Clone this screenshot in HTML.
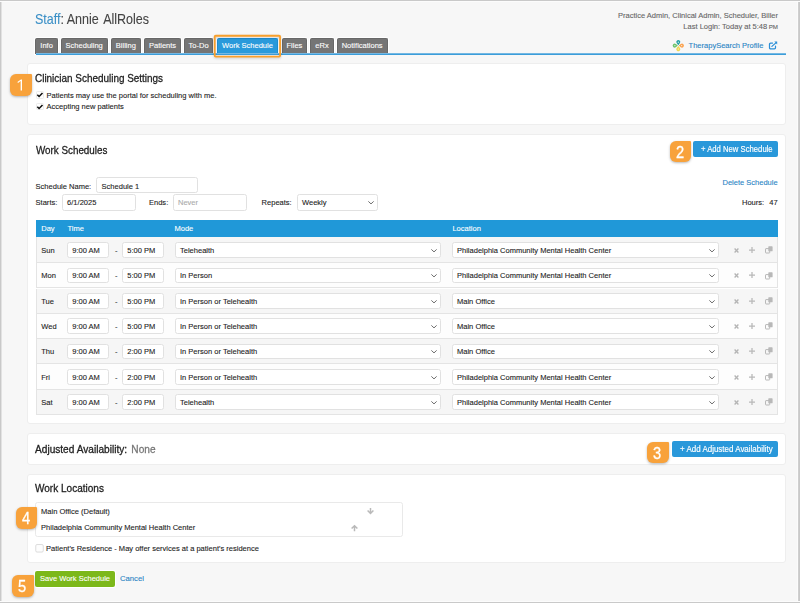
<!DOCTYPE html>
<html><head><meta charset="utf-8"><title>Work Schedule</title>
<style>
html,body{margin:0;padding:0;}
body{width:800px;height:603px;overflow:hidden;background:#f7f7f7;font-family:"Liberation Sans",sans-serif;position:relative;}
.t{position:absolute;white-space:nowrap;line-height:12px;font-family:"Liberation Sans",sans-serif;-webkit-text-stroke-width:0.1px;}
.b{position:absolute;box-sizing:border-box;}
.panel{background:#fff;border:1px solid #eeeeee;border-radius:3px;}
.inp{background:#fff;border:1px solid #e1e1e1;border-radius:2.5px;}
.tab{background:#757575;border:1px solid #686868;border-bottom:none;border-radius:2px 2px 0 0;box-shadow:0 0 0 1px #fff;}
.badge{background:#f8a23b;border-radius:6px 1px 6px 6px;box-shadow:0 1px 2.5px rgba(0,0,0,.28);}
.btn{background:#2998da;border-radius:2px;}
svg{position:absolute;overflow:visible;}
</style></head><body>
<div class="t " style="left:34.60px;top:12.58px;font-size:13.9px;color:#444;transform:scaleX(0.9005);transform-origin:0 50%;"><span style="color:#3a8fc6">Staff</span>: Annie<span style="margin-left:1.8px"> </span>AllRoles</div>
<div class="t " style="right:22.00px;top:10.34px;font-size:7.52px;color:#666;">Practice Admin, Clinical Admin, Scheduler, Biller</div>
<div class="t " style="right:22.00px;top:21.34px;font-size:7.52px;color:#666;">Last Login: Today at 5:48<span style="font-size:6.2px;margin-left:1.5px">PM</span></div>
<div class="t " style="left:688.60px;top:40.09px;font-size:7.52px;color:#2883c4;">TherapySearch Profile</div>
<div class="b tab" style="left:35.30px;top:37.50px;width:22.60px;height:16.10px;text-align:center;"></div>
<div class="t" style="left:35.30px;width:22.60px;text-align:center;top:39.50px;font-size:7.52px;color:#fff;">Info</div>
<div class="b tab" style="left:60.50px;top:37.50px;width:47.40px;height:16.10px;text-align:center;"></div>
<div class="t" style="left:60.50px;width:47.40px;text-align:center;top:39.50px;font-size:7.52px;color:#fff;">Scheduling</div>
<div class="b tab" style="left:110.70px;top:37.50px;width:30.35px;height:16.10px;text-align:center;"></div>
<div class="t" style="left:110.70px;width:30.35px;text-align:center;top:39.50px;font-size:7.52px;color:#fff;">Billing</div>
<div class="b tab" style="left:143.90px;top:37.50px;width:37.30px;height:16.10px;text-align:center;"></div>
<div class="t" style="left:143.90px;width:37.30px;text-align:center;top:39.50px;font-size:7.52px;color:#fff;">Patients</div>
<div class="b tab" style="left:183.80px;top:37.50px;width:29.70px;height:16.10px;text-align:center;"></div>
<div class="t" style="left:183.80px;width:29.70px;text-align:center;top:39.50px;font-size:7.52px;color:#fff;">To-Do</div>
<div class="b tab" style="left:216.60px;top:37.50px;width:61.80px;height:16.10px;background:#2a9adb;border-color:#1f8ed0;text-align:center;"></div>
<div class="t" style="left:216.60px;width:61.80px;text-align:center;top:39.50px;font-size:7.52px;color:#fff;">Work Schedule</div>
<div class="b tab" style="left:281.50px;top:37.50px;width:25.80px;height:16.10px;text-align:center;"></div>
<div class="t" style="left:281.50px;width:25.80px;text-align:center;top:39.50px;font-size:7.52px;color:#fff;">Files</div>
<div class="b tab" style="left:310.35px;top:37.50px;width:23.40px;height:16.10px;text-align:center;"></div>
<div class="t" style="left:310.35px;width:23.40px;text-align:center;top:39.50px;font-size:7.52px;color:#fff;">eRx</div>
<div class="b tab" style="left:336.60px;top:37.50px;width:51.10px;height:16.10px;text-align:center;"></div>
<div class="t" style="left:336.60px;width:51.10px;text-align:center;top:39.50px;font-size:7.52px;color:#fff;">Notifications</div>
<div class="b" style="left:36.00px;top:53.00px;width:750.00px;height:2.00px;background:linear-gradient(180deg,#74b8e3 0 1px,#3c9dd9 1px 2px);"></div>
<svg style="left:0;top:0" width="800" height="70" viewBox="0 0 800 70"><rect x="214.7" y="35.75" width="65.4" height="20.8" rx="1.1" fill="none" stroke="#f9a02c" stroke-width="1.85" style="filter:drop-shadow(0 1px 1px rgba(0,0,0,.18))"/></svg>
<div class="b panel" style="left:27.20px;top:63.00px;width:759.20px;height:62.40px;"></div>
<div class="b panel" style="left:27.20px;top:133.80px;width:759.20px;height:290.20px;"></div>
<div class="b panel" style="left:27.20px;top:432.50px;width:759.20px;height:32.90px;"></div>
<div class="b panel" style="left:27.20px;top:474.00px;width:759.20px;height:88.50px;"></div>
<div class="t " style="left:35.30px;top:72.42px;font-size:11.2px;color:#222;transform:scaleX(0.8876);transform-origin:0 50%;-webkit-text-stroke-width:0.3px;">Clinician Scheduling Settings</div>
<div class="t " style="left:46.50px;top:89.69px;font-size:7.52px;color:#222;">Patients may use the portal for scheduling with me.</div>
<div class="t " style="left:46.50px;top:101.09px;font-size:7.52px;color:#222;">Accepting new patients</div>
<div class="b" style="left:35.60px;top:91.00px;width:8.00px;height:7.60px;background:#fff;border:1px solid #ebebeb;border-radius:1.5px;"></div>
<svg style="left:35.6px;top:91.0px" width="8" height="7.6" viewBox="0 0 8 7.6"><path d="M1.3 3.7 L3.1 5.5 L6.5 2.0" fill="none" stroke="#111" stroke-width="1.55"/></svg>
<div class="b" style="left:35.60px;top:102.50px;width:8.00px;height:7.60px;background:#fff;border:1px solid #ebebeb;border-radius:1.5px;"></div>
<svg style="left:35.6px;top:102.5px" width="8" height="7.6" viewBox="0 0 8 7.6"><path d="M1.3 3.7 L3.1 5.5 L6.5 2.0" fill="none" stroke="#111" stroke-width="1.55"/></svg>
<div class="t " style="left:35.50px;top:144.02px;font-size:11.2px;color:#222;transform:scaleX(0.8777);transform-origin:0 50%;-webkit-text-stroke-width:0.3px;">Work Schedules</div>
<div class="b btn" style="left:693.40px;top:141.00px;width:84.60px;height:15.60px;"></div>
<div class="t " style="left:701.30px;top:143.42px;font-size:8.6px;color:#fff;transform:scaleX(0.8953);transform-origin:0 50%;-webkit-text-stroke-width:0.15px;">+ Add New Schedule</div>
<div class="t " style="right:22.40px;top:176.69px;font-size:7.52px;color:#2883c4;">Delete Schedule</div>
<div class="t " style="left:742.00px;top:197.09px;font-size:7.52px;color:#222;">Hours:</div>
<div class="t " style="right:22.40px;top:197.09px;font-size:7.52px;color:#222;">47</div>
<div class="t " style="left:35.60px;top:180.69px;font-size:7.52px;color:#222;">Schedule Name:</div>
<div class="b inp" style="left:96.30px;top:177.30px;width:101.30px;height:16.10px;"></div>
<div class="t " style="left:101.60px;top:180.69px;font-size:7.52px;color:#222;">Schedule 1</div>
<div class="t " style="left:35.60px;top:197.49px;font-size:7.52px;color:#222;">Starts:</div>
<div class="b inp" style="left:62.00px;top:194.40px;width:74.40px;height:16.20px;"></div>
<div class="t " style="left:67.10px;top:197.49px;font-size:7.52px;color:#222;">6/1/2025</div>
<div class="t " style="left:149.00px;top:197.49px;font-size:7.52px;color:#222;">Ends:</div>
<div class="b inp" style="left:173.00px;top:194.40px;width:74.00px;height:16.20px;"></div>
<div class="t " style="left:178.00px;top:197.49px;font-size:7.52px;color:#aaa;">Never</div>
<div class="t " style="left:261.60px;top:196.69px;font-size:7.52px;color:#222;">Repeats:</div>
<div class="b inp" style="left:297.00px;top:194.40px;width:81.00px;height:16.80px;"></div>
<div class="t " style="left:302.00px;top:197.49px;font-size:7.52px;color:#222;">Weekly</div>
<svg style="left:368.20px;top:201.30px" width="6" height="3.4" viewBox="0 0 6 3.4"><path d="M0.35 0.4 L3 2.9 L5.65 0.4" fill="none" stroke="#666" stroke-width="0.95"/></svg>
<div class="b" style="left:35.60px;top:220.00px;width:742.00px;height:17.40px;background:#2098d8;"></div>
<div class="t " style="left:41.25px;top:223.29px;font-size:7.52px;color:#fff;">Day</div>
<div class="t " style="left:67.50px;top:223.29px;font-size:7.52px;color:#fff;">Time</div>
<div class="t " style="left:174.50px;top:223.29px;font-size:7.52px;color:#fff;">Mode</div>
<div class="t " style="left:452.40px;top:223.29px;font-size:7.52px;color:#fff;">Location</div>
<div class="b" style="left:35.60px;top:237.40px;width:742.00px;height:25.80px;background:#f6f6f6;border:1px solid #e4e4e4;border-top:none;"></div>
<div class="t " style="left:41.25px;top:245.09px;font-size:7.52px;color:#222;">Sun</div>
<div class="b inp" style="left:67.30px;top:242.40px;width:42.10px;height:15.80px;"></div>
<div class="t " style="left:72.30px;top:245.09px;font-size:7.52px;color:#222;">9:00 AM</div>
<div class="t " style="left:115.00px;top:245.09px;font-size:7.52px;color:#222;">-</div>
<div class="b inp" style="left:122.00px;top:242.40px;width:42.30px;height:15.80px;"></div>
<div class="t " style="left:127.30px;top:245.09px;font-size:7.52px;color:#222;">5:00 PM</div>
<div class="b inp" style="left:175.00px;top:242.40px;width:266.40px;height:15.80px;"></div>
<div class="t " style="left:180.00px;top:245.09px;font-size:7.52px;color:#222;">Telehealth</div>
<svg style="left:431.20px;top:249.10px" width="6" height="3.4" viewBox="0 0 6 3.4"><path d="M0.35 0.4 L3 2.9 L5.65 0.4" fill="none" stroke="#666" stroke-width="0.95"/></svg>
<div class="b inp" style="left:452.00px;top:242.40px;width:267.00px;height:15.80px;"></div>
<div class="t " style="left:457.00px;top:245.09px;font-size:7.52px;color:#222;">Philadelphia Community Mental Health Center</div>
<svg style="left:708.80px;top:249.10px" width="6" height="3.4" viewBox="0 0 6 3.4"><path d="M0.35 0.4 L3 2.9 L5.65 0.4" fill="none" stroke="#666" stroke-width="0.95"/></svg>
<svg style="left:734.4px;top:248.00px" width="5" height="5" viewBox="0 0 5 5"><path d="M0.6 0.6 L4.4 4.4 M4.4 0.6 L0.6 4.4" fill="none" stroke="#b4b4b4" stroke-width="1.35"/></svg>
<svg style="left:749.4px;top:247.00px" width="6" height="6" viewBox="0 0 6 6"><path d="M3 0 L3 6 M0 3 L6 3" fill="none" stroke="#b8b8b8" stroke-width="1.25"/></svg>
<svg style="left:765.2px;top:246.20px" width="7.8" height="7.6" viewBox="0 0 7.8 7.6"><rect x="0.5" y="2.6" width="4.2" height="4.4" rx="0.5" fill="none" stroke="#b8b8b8" stroke-width="1"/><rect x="3.3" y="0.3" width="4.3" height="5" rx="0.6" fill="#b8b8b8"/></svg>
<div class="b" style="left:35.60px;top:263.20px;width:742.00px;height:25.30px;background:#fdfdfd;border:1px solid #e4e4e4;border-top:none;"></div>
<div class="t " style="left:41.25px;top:270.39px;font-size:7.52px;color:#222;">Mon</div>
<div class="b inp" style="left:67.30px;top:267.70px;width:42.10px;height:15.80px;"></div>
<div class="t " style="left:72.30px;top:270.39px;font-size:7.52px;color:#222;">9:00 AM</div>
<div class="t " style="left:115.00px;top:270.39px;font-size:7.52px;color:#222;">-</div>
<div class="b inp" style="left:122.00px;top:267.70px;width:42.30px;height:15.80px;"></div>
<div class="t " style="left:127.30px;top:270.39px;font-size:7.52px;color:#222;">5:00 PM</div>
<div class="b inp" style="left:175.00px;top:267.70px;width:266.40px;height:15.80px;"></div>
<div class="t " style="left:180.00px;top:270.39px;font-size:7.52px;color:#222;">In Person</div>
<svg style="left:431.20px;top:274.40px" width="6" height="3.4" viewBox="0 0 6 3.4"><path d="M0.35 0.4 L3 2.9 L5.65 0.4" fill="none" stroke="#666" stroke-width="0.95"/></svg>
<div class="b inp" style="left:452.00px;top:267.70px;width:267.00px;height:15.80px;"></div>
<div class="t " style="left:457.00px;top:270.39px;font-size:7.52px;color:#222;">Philadelphia Community Mental Health Center</div>
<svg style="left:708.80px;top:274.40px" width="6" height="3.4" viewBox="0 0 6 3.4"><path d="M0.35 0.4 L3 2.9 L5.65 0.4" fill="none" stroke="#666" stroke-width="0.95"/></svg>
<svg style="left:734.4px;top:273.30px" width="5" height="5" viewBox="0 0 5 5"><path d="M0.6 0.6 L4.4 4.4 M4.4 0.6 L0.6 4.4" fill="none" stroke="#b4b4b4" stroke-width="1.35"/></svg>
<svg style="left:749.4px;top:272.30px" width="6" height="6" viewBox="0 0 6 6"><path d="M3 0 L3 6 M0 3 L6 3" fill="none" stroke="#b8b8b8" stroke-width="1.25"/></svg>
<svg style="left:765.2px;top:271.50px" width="7.8" height="7.6" viewBox="0 0 7.8 7.6"><rect x="0.5" y="2.6" width="4.2" height="4.4" rx="0.5" fill="none" stroke="#b8b8b8" stroke-width="1"/><rect x="3.3" y="0.3" width="4.3" height="5" rx="0.6" fill="#b8b8b8"/></svg>
<div class="b" style="left:35.60px;top:288.50px;width:742.00px;height:25.30px;background:#f6f6f6;border:1px solid #e4e4e4;border-top:none;"></div>
<div class="t " style="left:41.25px;top:295.69px;font-size:7.52px;color:#222;">Tue</div>
<div class="b inp" style="left:67.30px;top:293.00px;width:42.10px;height:15.80px;"></div>
<div class="t " style="left:72.30px;top:295.69px;font-size:7.52px;color:#222;">9:00 AM</div>
<div class="t " style="left:115.00px;top:295.69px;font-size:7.52px;color:#222;">-</div>
<div class="b inp" style="left:122.00px;top:293.00px;width:42.30px;height:15.80px;"></div>
<div class="t " style="left:127.30px;top:295.69px;font-size:7.52px;color:#222;">5:00 PM</div>
<div class="b inp" style="left:175.00px;top:293.00px;width:266.40px;height:15.80px;"></div>
<div class="t " style="left:180.00px;top:295.69px;font-size:7.52px;color:#222;">In Person or Telehealth</div>
<svg style="left:431.20px;top:299.70px" width="6" height="3.4" viewBox="0 0 6 3.4"><path d="M0.35 0.4 L3 2.9 L5.65 0.4" fill="none" stroke="#666" stroke-width="0.95"/></svg>
<div class="b inp" style="left:452.00px;top:293.00px;width:267.00px;height:15.80px;"></div>
<div class="t " style="left:457.00px;top:295.69px;font-size:7.52px;color:#222;">Main Office</div>
<svg style="left:708.80px;top:299.70px" width="6" height="3.4" viewBox="0 0 6 3.4"><path d="M0.35 0.4 L3 2.9 L5.65 0.4" fill="none" stroke="#666" stroke-width="0.95"/></svg>
<svg style="left:734.4px;top:298.60px" width="5" height="5" viewBox="0 0 5 5"><path d="M0.6 0.6 L4.4 4.4 M4.4 0.6 L0.6 4.4" fill="none" stroke="#b4b4b4" stroke-width="1.35"/></svg>
<svg style="left:749.4px;top:297.60px" width="6" height="6" viewBox="0 0 6 6"><path d="M3 0 L3 6 M0 3 L6 3" fill="none" stroke="#b8b8b8" stroke-width="1.25"/></svg>
<svg style="left:765.2px;top:296.80px" width="7.8" height="7.6" viewBox="0 0 7.8 7.6"><rect x="0.5" y="2.6" width="4.2" height="4.4" rx="0.5" fill="none" stroke="#b8b8b8" stroke-width="1"/><rect x="3.3" y="0.3" width="4.3" height="5" rx="0.6" fill="#b8b8b8"/></svg>
<div class="b" style="left:35.60px;top:313.80px;width:742.00px;height:25.30px;background:#fdfdfd;border:1px solid #e4e4e4;border-top:none;"></div>
<div class="t " style="left:41.25px;top:320.99px;font-size:7.52px;color:#222;">Wed</div>
<div class="b inp" style="left:67.30px;top:318.30px;width:42.10px;height:15.80px;"></div>
<div class="t " style="left:72.30px;top:320.99px;font-size:7.52px;color:#222;">9:00 AM</div>
<div class="t " style="left:115.00px;top:320.99px;font-size:7.52px;color:#222;">-</div>
<div class="b inp" style="left:122.00px;top:318.30px;width:42.30px;height:15.80px;"></div>
<div class="t " style="left:127.30px;top:320.99px;font-size:7.52px;color:#222;">5:00 PM</div>
<div class="b inp" style="left:175.00px;top:318.30px;width:266.40px;height:15.80px;"></div>
<div class="t " style="left:180.00px;top:320.99px;font-size:7.52px;color:#222;">In Person or Telehealth</div>
<svg style="left:431.20px;top:325.00px" width="6" height="3.4" viewBox="0 0 6 3.4"><path d="M0.35 0.4 L3 2.9 L5.65 0.4" fill="none" stroke="#666" stroke-width="0.95"/></svg>
<div class="b inp" style="left:452.00px;top:318.30px;width:267.00px;height:15.80px;"></div>
<div class="t " style="left:457.00px;top:320.99px;font-size:7.52px;color:#222;">Main Office</div>
<svg style="left:708.80px;top:325.00px" width="6" height="3.4" viewBox="0 0 6 3.4"><path d="M0.35 0.4 L3 2.9 L5.65 0.4" fill="none" stroke="#666" stroke-width="0.95"/></svg>
<svg style="left:734.4px;top:323.90px" width="5" height="5" viewBox="0 0 5 5"><path d="M0.6 0.6 L4.4 4.4 M4.4 0.6 L0.6 4.4" fill="none" stroke="#b4b4b4" stroke-width="1.35"/></svg>
<svg style="left:749.4px;top:322.90px" width="6" height="6" viewBox="0 0 6 6"><path d="M3 0 L3 6 M0 3 L6 3" fill="none" stroke="#b8b8b8" stroke-width="1.25"/></svg>
<svg style="left:765.2px;top:322.10px" width="7.8" height="7.6" viewBox="0 0 7.8 7.6"><rect x="0.5" y="2.6" width="4.2" height="4.4" rx="0.5" fill="none" stroke="#b8b8b8" stroke-width="1"/><rect x="3.3" y="0.3" width="4.3" height="5" rx="0.6" fill="#b8b8b8"/></svg>
<div class="b" style="left:35.60px;top:339.10px;width:742.00px;height:25.30px;background:#f6f6f6;border:1px solid #e4e4e4;border-top:none;"></div>
<div class="t " style="left:41.25px;top:346.29px;font-size:7.52px;color:#222;">Thu</div>
<div class="b inp" style="left:67.30px;top:343.60px;width:42.10px;height:15.80px;"></div>
<div class="t " style="left:72.30px;top:346.29px;font-size:7.52px;color:#222;">9:00 AM</div>
<div class="t " style="left:115.00px;top:346.29px;font-size:7.52px;color:#222;">-</div>
<div class="b inp" style="left:122.00px;top:343.60px;width:42.30px;height:15.80px;"></div>
<div class="t " style="left:127.30px;top:346.29px;font-size:7.52px;color:#222;">2:00 PM</div>
<div class="b inp" style="left:175.00px;top:343.60px;width:266.40px;height:15.80px;"></div>
<div class="t " style="left:180.00px;top:346.29px;font-size:7.52px;color:#222;">In Person or Telehealth</div>
<svg style="left:431.20px;top:350.30px" width="6" height="3.4" viewBox="0 0 6 3.4"><path d="M0.35 0.4 L3 2.9 L5.65 0.4" fill="none" stroke="#666" stroke-width="0.95"/></svg>
<div class="b inp" style="left:452.00px;top:343.60px;width:267.00px;height:15.80px;"></div>
<div class="t " style="left:457.00px;top:346.29px;font-size:7.52px;color:#222;">Main Office</div>
<svg style="left:708.80px;top:350.30px" width="6" height="3.4" viewBox="0 0 6 3.4"><path d="M0.35 0.4 L3 2.9 L5.65 0.4" fill="none" stroke="#666" stroke-width="0.95"/></svg>
<svg style="left:734.4px;top:349.20px" width="5" height="5" viewBox="0 0 5 5"><path d="M0.6 0.6 L4.4 4.4 M4.4 0.6 L0.6 4.4" fill="none" stroke="#b4b4b4" stroke-width="1.35"/></svg>
<svg style="left:749.4px;top:348.20px" width="6" height="6" viewBox="0 0 6 6"><path d="M3 0 L3 6 M0 3 L6 3" fill="none" stroke="#b8b8b8" stroke-width="1.25"/></svg>
<svg style="left:765.2px;top:347.40px" width="7.8" height="7.6" viewBox="0 0 7.8 7.6"><rect x="0.5" y="2.6" width="4.2" height="4.4" rx="0.5" fill="none" stroke="#b8b8b8" stroke-width="1"/><rect x="3.3" y="0.3" width="4.3" height="5" rx="0.6" fill="#b8b8b8"/></svg>
<div class="b" style="left:35.60px;top:364.40px;width:742.00px;height:25.30px;background:#fdfdfd;border:1px solid #e4e4e4;border-top:none;"></div>
<div class="t " style="left:41.25px;top:371.59px;font-size:7.52px;color:#222;">Fri</div>
<div class="b inp" style="left:67.30px;top:368.90px;width:42.10px;height:15.80px;"></div>
<div class="t " style="left:72.30px;top:371.59px;font-size:7.52px;color:#222;">9:00 AM</div>
<div class="t " style="left:115.00px;top:371.59px;font-size:7.52px;color:#222;">-</div>
<div class="b inp" style="left:122.00px;top:368.90px;width:42.30px;height:15.80px;"></div>
<div class="t " style="left:127.30px;top:371.59px;font-size:7.52px;color:#222;">2:00 PM</div>
<div class="b inp" style="left:175.00px;top:368.90px;width:266.40px;height:15.80px;"></div>
<div class="t " style="left:180.00px;top:371.59px;font-size:7.52px;color:#222;">In Person or Telehealth</div>
<svg style="left:431.20px;top:375.60px" width="6" height="3.4" viewBox="0 0 6 3.4"><path d="M0.35 0.4 L3 2.9 L5.65 0.4" fill="none" stroke="#666" stroke-width="0.95"/></svg>
<div class="b inp" style="left:452.00px;top:368.90px;width:267.00px;height:15.80px;"></div>
<div class="t " style="left:457.00px;top:371.59px;font-size:7.52px;color:#222;">Philadelphia Community Mental Health Center</div>
<svg style="left:708.80px;top:375.60px" width="6" height="3.4" viewBox="0 0 6 3.4"><path d="M0.35 0.4 L3 2.9 L5.65 0.4" fill="none" stroke="#666" stroke-width="0.95"/></svg>
<svg style="left:734.4px;top:374.50px" width="5" height="5" viewBox="0 0 5 5"><path d="M0.6 0.6 L4.4 4.4 M4.4 0.6 L0.6 4.4" fill="none" stroke="#b4b4b4" stroke-width="1.35"/></svg>
<svg style="left:749.4px;top:373.50px" width="6" height="6" viewBox="0 0 6 6"><path d="M3 0 L3 6 M0 3 L6 3" fill="none" stroke="#b8b8b8" stroke-width="1.25"/></svg>
<svg style="left:765.2px;top:372.70px" width="7.8" height="7.6" viewBox="0 0 7.8 7.6"><rect x="0.5" y="2.6" width="4.2" height="4.4" rx="0.5" fill="none" stroke="#b8b8b8" stroke-width="1"/><rect x="3.3" y="0.3" width="4.3" height="5" rx="0.6" fill="#b8b8b8"/></svg>
<div class="b" style="left:35.60px;top:389.70px;width:742.00px;height:25.30px;background:#f6f6f6;border:1px solid #e4e4e4;border-top:none;"></div>
<div class="t " style="left:41.25px;top:396.89px;font-size:7.52px;color:#222;">Sat</div>
<div class="b inp" style="left:67.30px;top:394.20px;width:42.10px;height:15.80px;"></div>
<div class="t " style="left:72.30px;top:396.89px;font-size:7.52px;color:#222;">9:00 AM</div>
<div class="t " style="left:115.00px;top:396.89px;font-size:7.52px;color:#222;">-</div>
<div class="b inp" style="left:122.00px;top:394.20px;width:42.30px;height:15.80px;"></div>
<div class="t " style="left:127.30px;top:396.89px;font-size:7.52px;color:#222;">2:00 PM</div>
<div class="b inp" style="left:175.00px;top:394.20px;width:266.40px;height:15.80px;"></div>
<div class="t " style="left:180.00px;top:396.89px;font-size:7.52px;color:#222;">Telehealth</div>
<svg style="left:431.20px;top:400.90px" width="6" height="3.4" viewBox="0 0 6 3.4"><path d="M0.35 0.4 L3 2.9 L5.65 0.4" fill="none" stroke="#666" stroke-width="0.95"/></svg>
<div class="b inp" style="left:452.00px;top:394.20px;width:267.00px;height:15.80px;"></div>
<div class="t " style="left:457.00px;top:396.89px;font-size:7.52px;color:#222;">Philadelphia Community Mental Health Center</div>
<svg style="left:708.80px;top:400.90px" width="6" height="3.4" viewBox="0 0 6 3.4"><path d="M0.35 0.4 L3 2.9 L5.65 0.4" fill="none" stroke="#666" stroke-width="0.95"/></svg>
<svg style="left:734.4px;top:399.80px" width="5" height="5" viewBox="0 0 5 5"><path d="M0.6 0.6 L4.4 4.4 M4.4 0.6 L0.6 4.4" fill="none" stroke="#b4b4b4" stroke-width="1.35"/></svg>
<svg style="left:749.4px;top:398.80px" width="6" height="6" viewBox="0 0 6 6"><path d="M3 0 L3 6 M0 3 L6 3" fill="none" stroke="#b8b8b8" stroke-width="1.25"/></svg>
<svg style="left:765.2px;top:398.00px" width="7.8" height="7.6" viewBox="0 0 7.8 7.6"><rect x="0.5" y="2.6" width="4.2" height="4.4" rx="0.5" fill="none" stroke="#b8b8b8" stroke-width="1"/><rect x="3.3" y="0.3" width="4.3" height="5" rx="0.6" fill="#b8b8b8"/></svg>
<div class="t " style="left:35.00px;top:443.02px;font-size:11.2px;color:#222;transform:scaleX(0.9045);transform-origin:0 50%;-webkit-text-stroke-width:0.3px;">Adjusted Availability: <span style="color:#777;margin-left:1.6px">None</span></div>
<div class="b btn" style="left:672.40px;top:441.30px;width:105.60px;height:15.40px;"></div>
<div class="t " style="left:680.20px;top:443.42px;font-size:8.6px;color:#fff;transform:scaleX(0.9279);transform-origin:0 50%;-webkit-text-stroke-width:0.15px;">+ Add Adjusted Availability</div>
<div class="t " style="left:35.30px;top:482.12px;font-size:11.2px;color:#222;transform:scaleX(0.8962);transform-origin:0 50%;-webkit-text-stroke-width:0.3px;">Work Locations</div>
<div class="b" style="left:35.10px;top:502.40px;width:367.50px;height:34.20px;background:#fff;border:1px solid #e9e9e9;border-radius:2.5px;"></div>
<div class="t " style="left:41.10px;top:506.09px;font-size:7.52px;color:#222;">Main Office (Default)</div>
<div class="t " style="left:41.10px;top:522.49px;font-size:7.52px;color:#222;">Philadelphia Community Mental Health Center</div>
<svg style="left:366.6px;top:508.4px" width="7" height="6.2" viewBox="0 0 7 6.2"><path d="M3.5 0 L3.5 5.2 M0.6 2.6 L3.5 5.5 L6.4 2.6" fill="none" stroke="#b9b9b9" stroke-width="1.5"/></svg>
<svg style="left:350.5px;top:525.4px" width="7" height="6.2" viewBox="0 0 7 6.2"><path d="M3.5 6.2 L3.5 1 M0.6 3.6 L3.5 0.7 L6.4 3.6" fill="none" stroke="#b9b9b9" stroke-width="1.5"/></svg>
<svg style="left:0;top:540px" width="60" height="16" viewBox="0 540 60 16"><rect x="35.75" y="544.55" width="7.5" height="7.5" rx="1.3" fill="#fdfdfd" stroke="#dcdcdc" stroke-width="1"/></svg>
<div class="t " style="left:46.00px;top:542.59px;font-size:7.52px;color:#222;">Patient's Residence - May offer services at a patient's residence</div>
<div class="b" style="left:35.10px;top:571.00px;width:79.90px;height:15.60px;background:#7cb81a;border-radius:2px;box-shadow:0 0 0 1px #fff;"></div>
<div class="t " style="left:40.00px;top:573.49px;font-size:7.52px;color:#fff;">Save Work Schedule</div>
<div class="t " style="left:120.00px;top:573.43px;font-size:7.7px;color:#2883c4;">Cancel</div>
<div class="b badge" style="left:9.80px;top:74.00px;width:21.80px;height:21.60px;"></div>
<svg style="left:17.30px;top:79.20px" width="6" height="11.6" viewBox="0 0 6 11.6"><path d="M0.4 3.1 L3.9 0.4 L5.0 0.4 L5.0 11.6 L3.65 11.6 L3.65 1.9 L1.0 4.0 Z" fill="#fff"/></svg>
<div class="b badge" style="left:669.80px;top:141.20px;width:21.50px;height:20.70px;"></div>
<div class="t" style="left:665.15px;width:30px;text-align:center;top:141.69px;line-height:20px;font-size:16.3px;color:#fff;-webkit-text-stroke-width:0.3px;transform:scaleX(0.9);">2</div>
<div class="b badge" style="left:647.00px;top:441.80px;width:21.80px;height:21.40px;"></div>
<div class="t" style="left:642.45px;width:30px;text-align:center;top:443.19px;line-height:20px;font-size:16.3px;color:#fff;-webkit-text-stroke-width:0.3px;transform:scaleX(0.9);">3</div>
<div class="b badge" style="left:15.50px;top:507.00px;width:21.80px;height:21.60px;"></div>
<div class="t" style="left:10.70px;width:30px;text-align:center;top:508.09px;line-height:20px;font-size:16.3px;color:#fff;-webkit-text-stroke-width:0.3px;transform:scaleX(0.9);">4</div>
<div class="b badge" style="left:12.00px;top:575.00px;width:21.80px;height:21.70px;"></div>
<div class="t" style="left:7.10px;width:30px;text-align:center;top:575.69px;line-height:20px;font-size:16.3px;color:#fff;-webkit-text-stroke-width:0.3px;transform:scaleX(0.9);">5</div>
<svg style="left:0;top:0" width="800" height="603" viewBox="0 0 800 603">
<g transform="translate(678.3,45.6) scale(0.92)">
<g id="petal"><path d="M0,-0.5 L-1.75,-2.7 A2.15,2.15 0 1 1 1.75,-2.7 Z" fill="#1f9ea3"/><circle cx="0" cy="-3.7" r="0.65" fill="#f7f7f7"/></g>
<g transform="rotate(90)"><path d="M0,-0.5 L-1.75,-2.7 A2.15,2.15 0 1 1 1.75,-2.7 Z" fill="#fba350"/><circle cx="0" cy="-3.7" r="0.65" fill="#f7f7f7"/></g>
<g transform="rotate(180)"><path d="M0,-0.5 L-1.75,-2.7 A2.15,2.15 0 1 1 1.75,-2.7 Z" fill="#efd64f"/><circle cx="0" cy="-3.7" r="0.65" fill="#f7f7f7"/></g>
<g transform="rotate(270)"><path d="M0,-0.5 L-1.75,-2.7 A2.15,2.15 0 1 1 1.75,-2.7 Z" fill="#6cc36c"/><circle cx="0" cy="-3.7" r="0.65" fill="#f7f7f7"/></g>
</g>
<g fill="none" stroke="#2b8fd8" stroke-width="1.25" stroke-linecap="round" stroke-linejoin="round">
<path d="M772.6 43.1 H770.6 a1.1 1.1 0 0 0 -1.1 1.1 V47.7 a1.1 1.1 0 0 0 1.1 1.1 H774.4 a1.1 1.1 0 0 0 1.1 -1.1 V46.2"/>
<path d="M771.9 46.4 L776.2 42.6"/>
</g>
<path d="M774.3 41.6 H777.2 V44.6 Z" fill="#2b8fd8"/>
</svg>
<div class="b" style="left:0;top:0;width:2px;height:603px;background:linear-gradient(90deg,#c9c9c9 0 1px,#e2e2e2 1px 2px);"></div>
<div class="b" style="left:797px;top:0;width:3px;height:603px;background:linear-gradient(90deg,#fbfbfb 0 1px,#cfcfcf 1px 2px,#c9c9c9 2px 3px);"></div>
<div class="b" style="left:0;top:0;width:800px;height:2px;background:linear-gradient(180deg,#c9c9c9 0 1px,#fcfcfc 1px 2px);"></div>
<div class="b" style="left:0;top:601px;width:800px;height:2px;background:linear-gradient(180deg,#fcfcfc 0 1px,#c9c9c9 1px 2px);"></div>
</body></html>
